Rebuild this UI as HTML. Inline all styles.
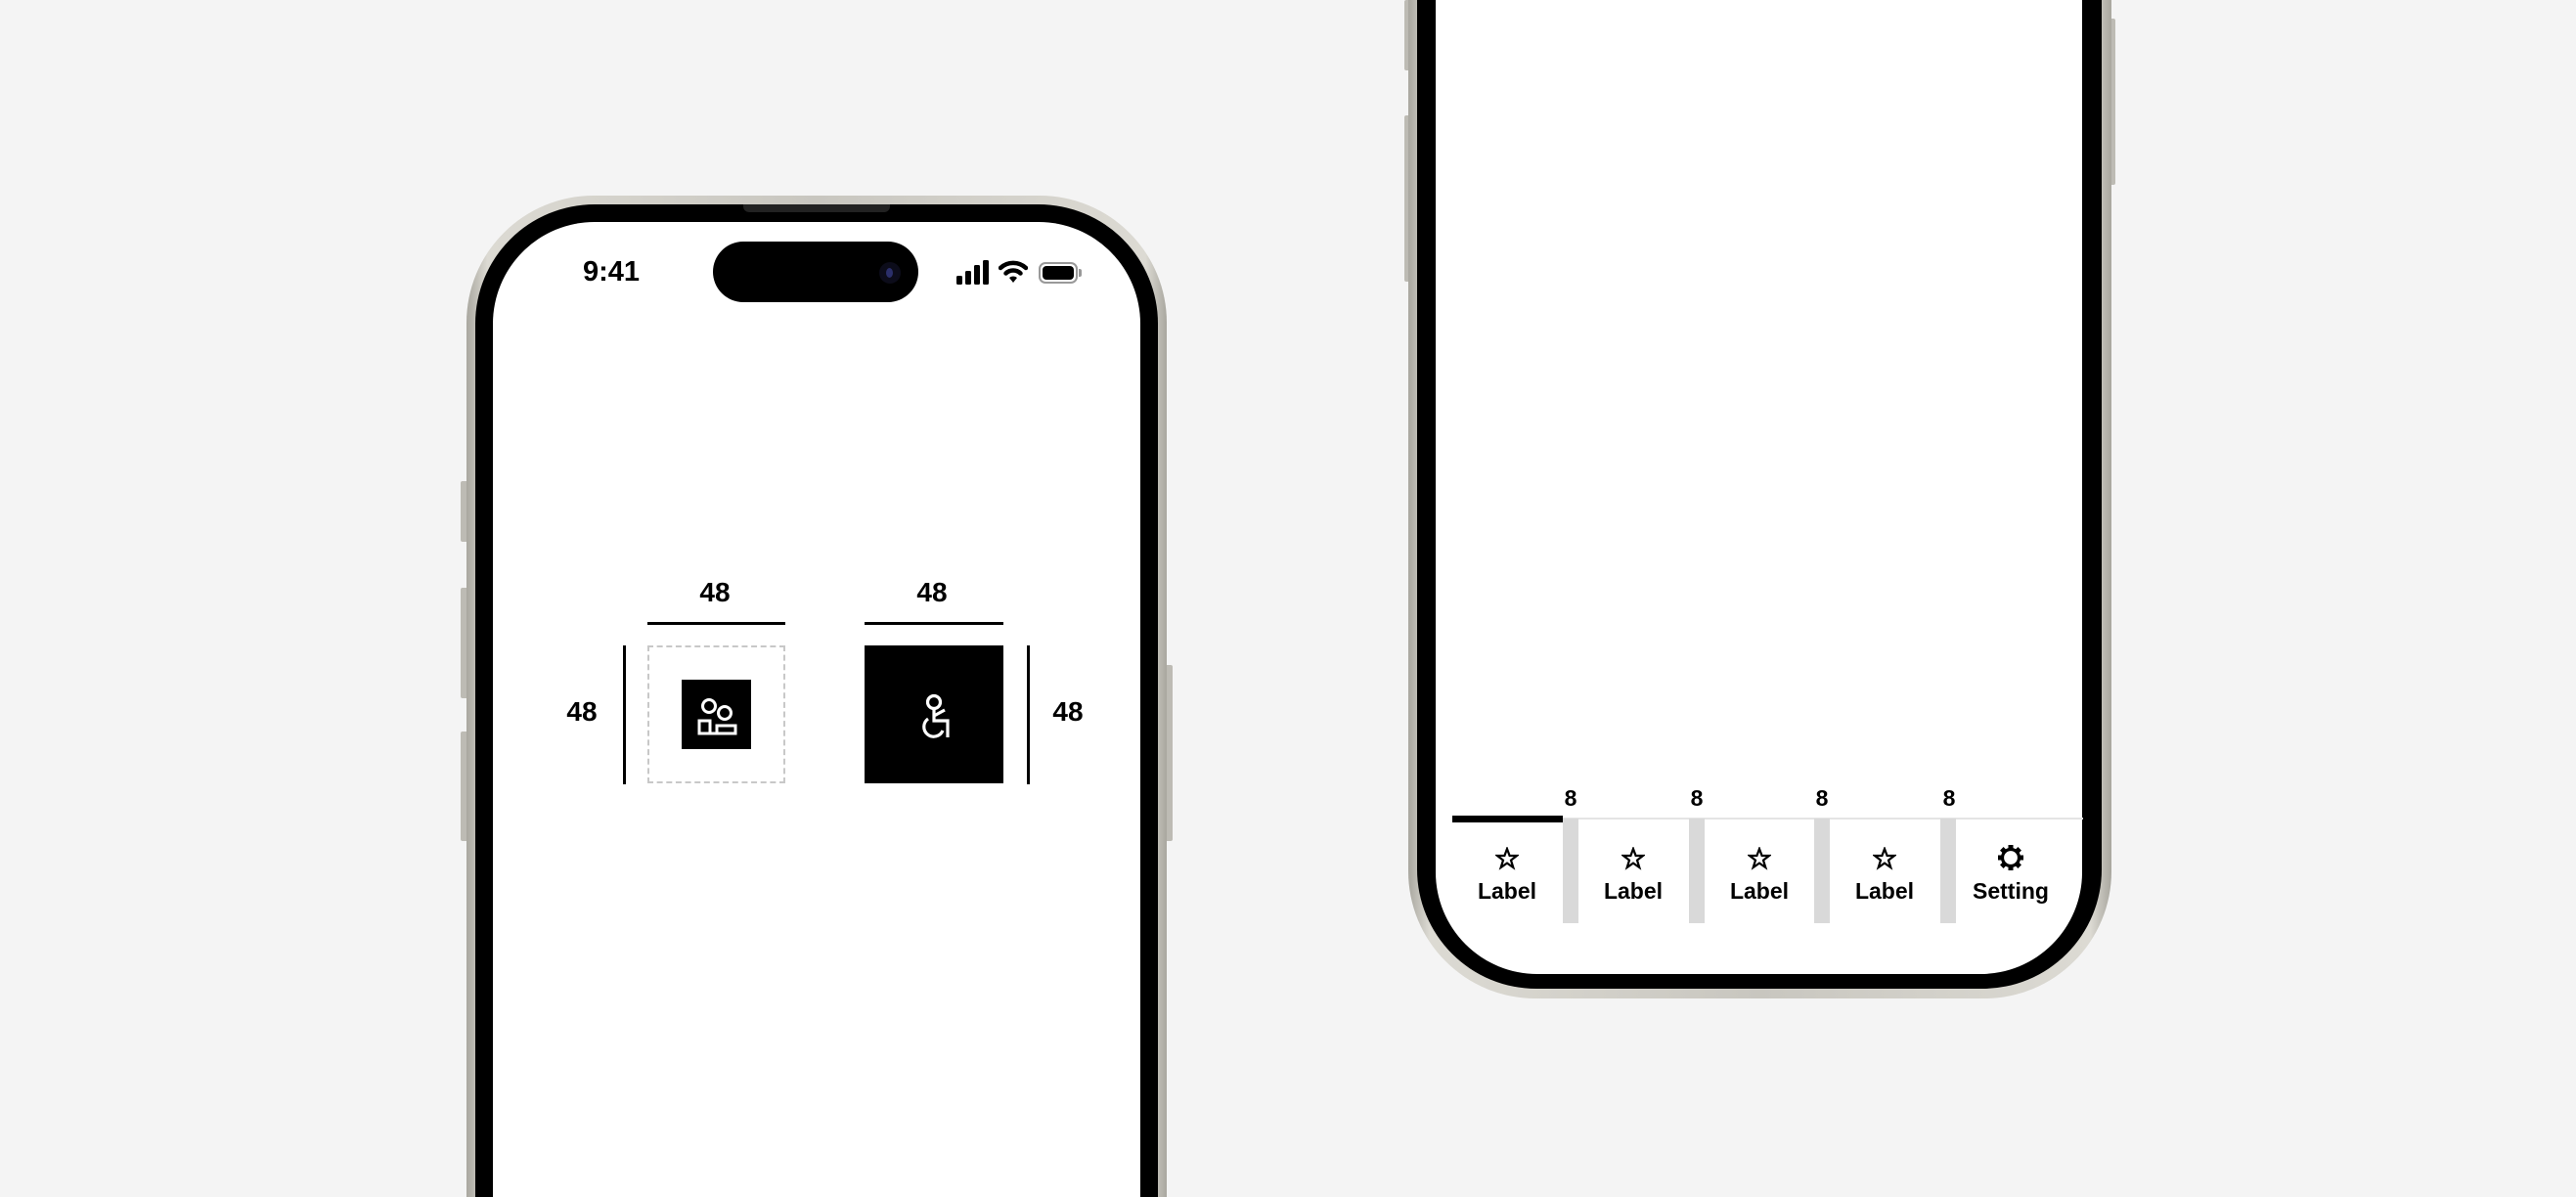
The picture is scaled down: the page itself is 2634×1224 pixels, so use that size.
<!DOCTYPE html>
<html><head><meta charset="utf-8"><style>
*{margin:0;padding:0;box-sizing:border-box}
html,body{width:2634px;height:1224px;overflow:hidden}
body{background:#f4f4f4;font-family:"Liberation Sans",sans-serif;color:#000}
#w{position:relative;width:2634px;height:1224px;overflow:hidden}
.a{position:absolute}
.frame{background:linear-gradient(90deg,#a9a79f,#dcdad3 3%,#c8c6bf 50%,#dcdad3 97%,#a9a79f);}
.bez{background:#000}
.scr{background:#fff;overflow:hidden}
.btn{background:#bdbbb4;border-radius:2px}
.n{font-size:28px;font-weight:bold;text-align:center;width:60px;line-height:30px}
.t{font-size:23px;font-weight:bold;text-align:center;width:110px}
</style></head><body><div id="w">

<div class="a btn" style="left:471px;top:492px;width:8px;height:62px"></div>
<div class="a btn" style="left:471px;top:601px;width:8px;height:113px"></div>
<div class="a btn" style="left:471px;top:748px;width:8px;height:112px"></div>
<div class="a btn" style="left:1191px;top:680px;width:8px;height:180px"></div>
<div class="a frame" style="left:477px;top:200px;width:716px;height:1024px;border-radius:130px 130px 0 0"></div>
<div class="a bez" style="left:486px;top:209px;width:698px;height:1015px;border-radius:122px 122px 0 0"></div>
<div class="a scr" style="left:504px;top:227px;width:662px;height:997px;border-radius:104px 104px 0 0"></div>
<div class="a" style="left:760px;top:209px;width:150px;height:8px;background:#222;border-radius:0 0 6px 6px"></div>

<div class="a" style="left:596px;top:262px;font-size:29px;font-weight:bold">9:41</div>
<div class="a" style="left:729px;top:247px;width:210px;height:62px;background:#000;border-radius:31px"></div>
<div class="a" style="left:899px;top:268px;width:22px;height:22px;border-radius:50%;background:#0c0c1a"></div>
<div class="a" style="left:906px;top:274px;width:7px;height:10px;border-radius:50%;background:#2b2f6a"></div>
<svg class="a" style="left:978px;top:266px" width="34" height="26"><rect x="0" y="16" width="6" height="9" rx="1.5"/><rect x="9" y="11" width="6" height="14" rx="1.5"/><rect x="18" y="5" width="6" height="20" rx="1.5"/><rect x="27" y="0" width="6" height="25" rx="1.5"/></svg>
<svg class="a" style="left:1021px;top:265px" width="30" height="26" viewBox="0 0 30 26"><path d="M2 9 A19 19 0 0 1 28 9" stroke="#000" stroke-width="4.5" fill="none" stroke-linecap="round"/><path d="M7.5 14.5 A11 11 0 0 1 22.5 14.5" stroke="#000" stroke-width="4.5" fill="none" stroke-linecap="round"/><path d="M11 19 L15 24 L19 19 A6 6 0 0 0 11 19Z"/></svg>
<div class="a" style="left:1062px;top:268px;width:40px;height:22px;border:2px solid #999;border-radius:7px;padding:2px"><div style="width:100%;height:100%;background:#000;border-radius:4px"></div></div>
<div class="a" style="left:1103px;top:275px;width:3px;height:8px;background:#999;border-radius:0 2px 2px 0"></div>

<div class="n a" style="left:701px;top:591px">48</div>
<div class="n a" style="left:923px;top:591px">48</div>
<div class="a" style="left:662px;top:636px;width:141px;height:3px;background:#000"></div>
<div class="a" style="left:884px;top:636px;width:142px;height:3px;background:#000"></div>
<div class="a" style="left:637px;top:660px;width:3px;height:142px;background:#000"></div>
<div class="a" style="left:1050px;top:660px;width:3px;height:142px;background:#000"></div>
<div class="n a" style="left:565px;top:713px">48</div>
<div class="n a" style="left:1062px;top:713px">48</div>
<div class="a" style="left:662px;top:660px;width:141px;height:141px;border:2px dashed #c8c8c8"></div>
<div class="a" style="left:697px;top:695px;width:71px;height:71px;background:#000"></div>
<svg class="a" style="left:697px;top:695px" width="71" height="71" viewBox="0 0 71 71" fill="none" stroke="#fff" stroke-width="3">
<circle cx="28" cy="27" r="6.5"/><circle cx="44" cy="34" r="6.5"/><path d="M18 55 V42 H29 V55 Z M29 55 H55 V47 H36 V55"/></svg>
<div class="a" style="left:884px;top:660px;width:142px;height:141px;background:#000"></div>
<svg class="a" style="left:884px;top:660px" width="142" height="141" viewBox="0 0 142 141" fill="none" stroke="#fff" stroke-width="3.2">
<circle cx="71" cy="58" r="6.5"/><path d="M71 65 V77 H85 V94 M71 72 L82 66 M65 75 A10 10 0 1 0 80 87"/></svg>

<div class="a btn" style="left:1436px;top:0px;width:7px;height:72px"></div>
<div class="a btn" style="left:1436px;top:118px;width:7px;height:170px"></div>
<div class="a btn" style="left:2156px;top:19px;width:7px;height:170px"></div>
<div class="a frame" style="left:1440px;top:0;width:719px;height:1021px;border-radius:0 0 130px 130px"></div>
<div class="a bez" style="left:1449px;top:0;width:700px;height:1011px;border-radius:0 0 122px 122px"></div>
<div class="a scr" style="left:1468px;top:0;width:661px;height:996px;border-radius:0 0 104px 104px"></div>

<div class="a" style="left:1485px;top:836px;width:645px;height:2px;background:#e4e4e4"></div>
<div class="a" style="left:1485px;top:834px;width:113px;height:7px;background:#000"></div>
<div class="a" style="left:1598px;top:837px;width:16px;height:107px;background:#d9d9d9"></div>
<div class="a" style="left:1727px;top:837px;width:16px;height:107px;background:#d9d9d9"></div>
<div class="a" style="left:1855px;top:837px;width:16px;height:107px;background:#d9d9d9"></div>
<div class="a" style="left:1984px;top:837px;width:16px;height:107px;background:#d9d9d9"></div>
<div class="a t" style="left:1551px;top:803px">8</div>
<div class="a t" style="left:1680px;top:803px">8</div>
<div class="a t" style="left:1808px;top:803px">8</div>
<div class="a t" style="left:1938px;top:803px">8</div>

<svg width="0" height="0" style="position:absolute"><defs><path id="st" d="M12 2 L14.6 9 L22 9 L16 13.6 L18.3 21 L12 16.6 L5.7 21 L8 13.6 L2 9 L9.4 9 Z" fill="none" stroke="#000" stroke-width="2.2"/></defs></svg>
<svg class="a" style="left:1529px;top:866px" width="24" height="24"><use href="#st"/></svg>
<svg class="a" style="left:1658px;top:866px" width="24" height="24"><use href="#st"/></svg>
<svg class="a" style="left:1787px;top:866px" width="24" height="24"><use href="#st"/></svg>
<svg class="a" style="left:1915px;top:866px" width="24" height="24"><use href="#st"/></svg>
<svg class="a" style="left:2042px;top:863px" width="28" height="28" viewBox="0 0 28 28"><g fill="#000"><rect x="11.5" y="1" width="5" height="5"/><rect x="11.5" y="22" width="5" height="5"/><rect x="1" y="11.5" width="5" height="5"/><rect x="22" y="11.5" width="5" height="5"/><rect x="11.5" y="1" width="5" height="5" transform="rotate(45 14 14)"/><rect x="11.5" y="22" width="5" height="5" transform="rotate(45 14 14)"/><rect x="1" y="11.5" width="5" height="5" transform="rotate(45 14 14)"/><rect x="22" y="11.5" width="5" height="5" transform="rotate(45 14 14)"/></g><circle cx="14" cy="14" r="8.5" fill="none" stroke="#000" stroke-width="3.2"/></svg>
<div class="a t" style="left:1486px;top:898px">Label</div>
<div class="a t" style="left:1615px;top:898px">Label</div>
<div class="a t" style="left:1744px;top:898px">Label</div>
<div class="a t" style="left:1872px;top:898px">Label</div>
<div class="a t" style="left:2001px;top:898px">Setting</div>
</div></body></html>
